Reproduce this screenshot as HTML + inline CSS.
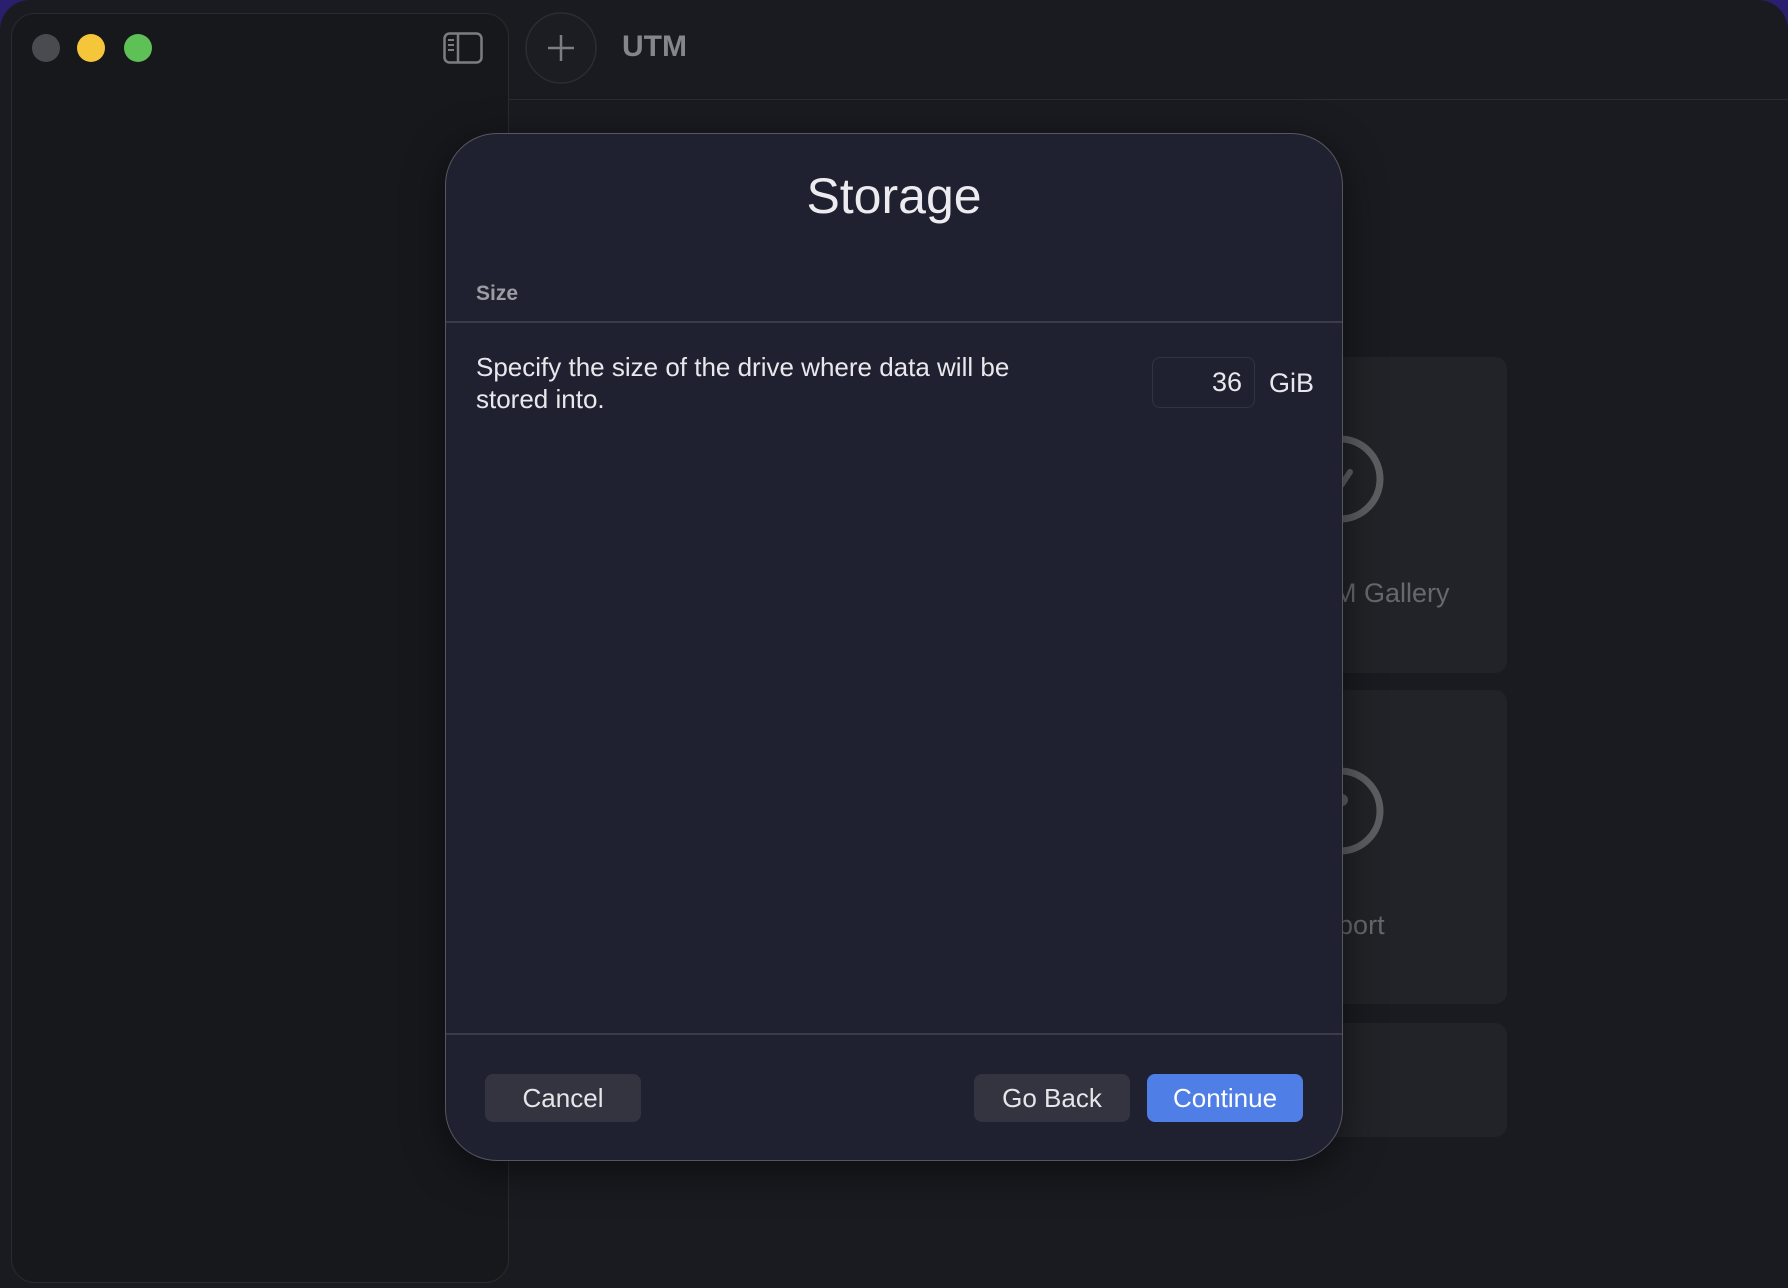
<!DOCTYPE html>
<html><head><meta charset="utf-8"><style>
*{margin:0;padding:0;box-sizing:border-box}
body{width:1788px;height:1288px;background:#2a1f6e;font-family:"Liberation Sans",sans-serif;overflow:hidden;position:relative}
.win{position:absolute;left:0;top:0;width:1788px;height:1288px;background:#1a1b20;border-radius:30px 30px 0 0;overflow:hidden}
.side{position:absolute;left:11px;top:13px;width:498px;height:1270px;background:#17181c;border:1px solid #2a2b30;border-radius:24px}
.dot{position:absolute;top:34px;width:28px;height:28px;border-radius:50%}
.tb{position:absolute;left:509px;right:0;top:99px;height:1px;background:#2b2c31}
.card{position:absolute;left:1100px;width:407px;background:#222328;border-radius:12px}
.ctext{position:absolute;color:#67686d;font-size:27px}
.modal{position:absolute;left:445px;top:133px;width:898px;height:1028px;background:#202130;border:1.5px solid #55565f;border-radius:52px;box-shadow:0 10px 40px rgba(0,0,0,.5);overflow:hidden}
.btn{position:absolute;top:940px;height:48px;width:156px;border-radius:8px;background:#33343f;color:#e6e6ea;font-size:26px;text-align:center;line-height:48px}
</style></head><body>
<div class="win">
<div class="side">
</div>
<div class="dot" style="left:32px;background:#4a4b50"></div>
<div class="dot" style="left:77px;background:#f5c53a"></div>
<div class="dot" style="left:124px;background:#5ec156"></div>
<svg style="position:absolute;left:443px;top:32px" width="40" height="32" viewBox="0 0 40 32"><rect x="1.5" y="1.5" width="37" height="29" rx="5" fill="none" stroke="#7c7d82" stroke-width="2.5"/><line x1="15" y1="2" x2="15" y2="30" stroke="#7c7d82" stroke-width="2.5"/><line x1="5" y1="8" x2="11" y2="8" stroke="#7c7d82" stroke-width="2"/><line x1="5" y1="13" x2="11" y2="13" stroke="#7c7d82" stroke-width="2"/><line x1="5" y1="18" x2="11" y2="18" stroke="#7c7d82" stroke-width="2"/></svg>
<svg style="position:absolute;left:525px;top:12px" width="72" height="72"><circle cx="36" cy="36" r="35" fill="#1c1d22" stroke="#2c2d33" stroke-width="1.5"/><line x1="36" y1="23" x2="36" y2="49" stroke="#7c7d82" stroke-width="2.5"/><line x1="23" y1="36" x2="49" y2="36" stroke="#7c7d82" stroke-width="2.5"/></svg>
<div style="position:absolute;left:622px;top:30px;font-size:30px;font-weight:bold;color:#85868b">UTM</div>
<div class="tb"></div>
<div class="card" style="top:357px;height:316px"></div>
<div class="card" style="top:690px;height:314px"></div>
<div class="card" style="top:1023px;height:114px"></div>
<svg style="position:absolute;left:1280px;top:420px" width="120" height="480"><circle cx="60" cy="59" r="40" fill="none" stroke="#5d5e62" stroke-width="7"/><line x1="58" y1="70" x2="70" y2="52" stroke="#5d5e62" stroke-width="6" stroke-linecap="round"/><circle cx="60" cy="391" r="40" fill="none" stroke="#5d5e62" stroke-width="7"/><circle cx="62" cy="380" r="6" fill="#5d5e62"/></svg>
<div class="ctext" style="left:1316px;top:578px">VM Gallery</div>
<div class="ctext" style="left:1290px;top:910px">Support</div>
<div class="modal">
<div style="position:absolute;left:0;right:0;top:33px;text-align:center;font-size:50px;color:#ececf0">Storage</div>
<div style="position:absolute;left:30px;top:148px;font-size:21px;font-weight:bold;color:#9c9ca3">Size</div>
<div style="position:absolute;left:0;right:0;top:187px;height:1.5px;background:#3b3c47"></div>
<div style="position:absolute;left:30px;top:217px;width:580px;font-size:26px;line-height:32px;color:#e8e8ec">Specify the size of the drive where data will be stored into.</div>
<div style="position:absolute;left:706px;top:223px;width:103px;height:51px;border:1.5px solid #33343f;border-radius:8px;text-align:right;padding-right:12px;line-height:48px;font-size:27px;color:#e8e8ec">36</div>
<div style="position:absolute;left:823px;top:234px;font-size:27px;color:#e8e8ec">GiB</div>
<div style="position:absolute;left:0;right:0;top:899px;height:1.5px;background:#3b3c47"></div>
<div class="btn" style="left:39px">Cancel</div>
<div class="btn" style="left:528px">Go Back</div>
<div class="btn" style="left:701px;background:#4f7fe6;color:#fff">Continue</div>
</div>
</div>
</body></html>
